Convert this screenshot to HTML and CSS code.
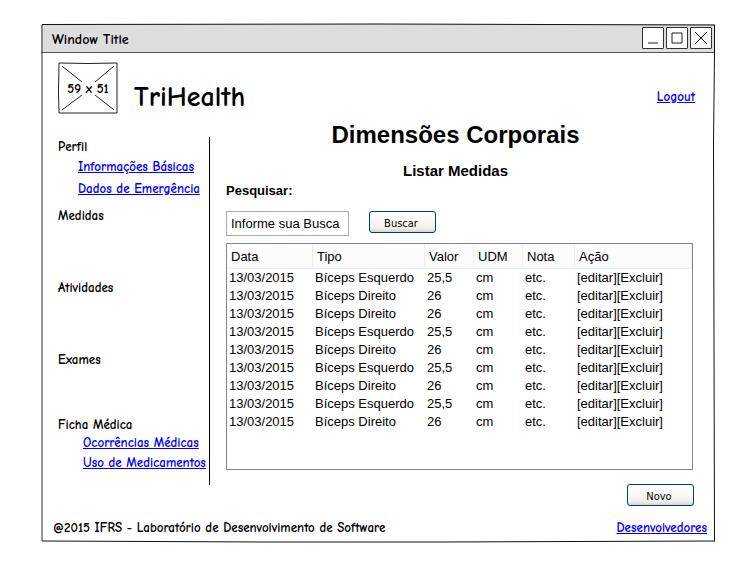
FILE: index.html
```html
<!DOCTYPE html>
<html lang="pt-BR">
<head>
<meta charset="utf-8">
<meta name="viewport" content="width=device-width, initial-scale=1">
<title>TriHealth</title>
<link rel="stylesheet" href="styles.css">
</head>
<body>
<div class="window">
  <svg class="frame" viewBox="0 0 674 518" preserveAspectRatio="none" aria-hidden="true">
    <path class="edge" d="M1 0.500 L340 0 L674 1"/>
    <path class="edge" d="M673.500 1 L673.500 28 L672.500 120 L673.500 517"/>
    <path class="edge" d="M1 517 L220 518 L400 518 L674 517"/>
    <path class="edge soft" d="M1 1 L1 517"/>
  </svg>
  <header class="titlebar">
    <span class="caption">Window Title</span>
    <div class="controls">
      <button type="button" class="control" aria-label="Minimizar"><svg viewBox="0 0 20 20"><path d="M5 15H15"/></svg></button>
      <button type="button" class="control" aria-label="Maximizar"><svg viewBox="0 0 20 20"><path d="M5 5H15V15H5Z"/></svg></button>
      <button type="button" class="control" aria-label="Fechar"><svg viewBox="0 0 20 20"><path class="dark" d="M4 4L16 16M16 4L4 16"/></svg></button>
    </div>
  </header>
  <div class="brand">
    <svg class="logo" viewBox="0 0 60 52" role="img" aria-label="59 x 51">
      <path class="line" d="M1 1L30 1.500L59 1L59 51L1 51L0.500 30Z"/>
      <path class="line" d="M4 4L24 20M56 4L37 20M4 48L24 33M56 48L37 33"/>
      <text x="30" y="31" text-anchor="middle">59 x 51</text>
    </svg>
    <span class="name">TriHealth</span>
    <a class="logout" href="#">Logout</a>
  </div>
  <div class="content">
    <nav class="menu">
      <section><span>Perfil</span><a href="#">Informações Básicas</a><a href="#">Dados de Emergência</a></section>
      <section><span>Medidas</span></section>
      <section><span>Atividades</span></section>
      <section><span>Exames</span></section>
      <section class="records"><span>Ficha Médica</span><a href="#">Ocorrências Médicas</a><a href="#">Uso de Medicamentos</a></section>
    </nav>
    <main class="main">
      <h1>Dimensões Corporais</h1>
      <h2>Listar Medidas</h2>
      <form class="search">
        <label for="q">Pesquisar:</label>
        <div class="search-row">
          <input id="q" type="text" value="Informe sua Busca">
          <button type="button" class="btn">Buscar</button>
        </div>
      </form>
      <div class="list">
        <table>
          <colgroup><col class="c-date"><col class="c-type"><col class="c-value"><col class="c-value"><col class="c-note"><col></colgroup>
          <thead><tr><th>Data</th><th>Tipo</th><th>Valor</th><th>UDM</th><th>Nota</th><th>Ação</th></tr></thead>
          <tbody>
            <tr><td>13/03/2015</td><td>Bíceps Esquerdo</td><td>25,5</td><td>cm</td><td>etc.</td><td>[editar][Excluir]</td></tr>
            <tr><td>13/03/2015</td><td>Bíceps Direito</td><td>26</td><td>cm</td><td>etc.</td><td>[editar][Excluir]</td></tr>
            <tr><td>13/03/2015</td><td>Bíceps Direito</td><td>26</td><td>cm</td><td>etc.</td><td>[editar][Excluir]</td></tr>
            <tr><td>13/03/2015</td><td>Bíceps Esquerdo</td><td>25,5</td><td>cm</td><td>etc.</td><td>[editar][Excluir]</td></tr>
            <tr><td>13/03/2015</td><td>Bíceps Direito</td><td>26</td><td>cm</td><td>etc.</td><td>[editar][Excluir]</td></tr>
            <tr><td>13/03/2015</td><td>Bíceps Esquerdo</td><td>25,5</td><td>cm</td><td>etc.</td><td>[editar][Excluir]</td></tr>
            <tr><td>13/03/2015</td><td>Bíceps Direito</td><td>26</td><td>cm</td><td>etc.</td><td>[editar][Excluir]</td></tr>
            <tr><td>13/03/2015</td><td>Bíceps Esquerdo</td><td>25,5</td><td>cm</td><td>etc.</td><td>[editar][Excluir]</td></tr>
            <tr><td>13/03/2015</td><td>Bíceps Direito</td><td>26</td><td>cm</td><td>etc.</td><td>[editar][Excluir]</td></tr>
          </tbody>
        </table>
      </div>
      <div class="actions"><button type="button" class="btn">Novo</button></div>
    </main>
  </div>
  <footer class="footer">
    <span>@2015 IFRS - Laboratório de Desenvolvimento de Software</span>
    <a href="#">Desenvolvedores</a>
  </footer>
</div>
</body>
</html>
```
FILE: styles.css
```css
* { box-sizing: border-box; }

body {
  margin: 0;
  padding: 24px 35px 36px 41px;
  background: #fff;
  color: #000;
  font: 700 13px/20px "Comic Sans MS", "Comic Neue", "Open Sans", sans-serif;
}

a { color: #00f; }

.window { position: relative; }

.frame {
  position: absolute;
  inset: 0;
  width: 100%;
  height: 100%;
  overflow: visible;
  pointer-events: none;
}

.edge {
  fill: none;
  stroke: #111;
  stroke-width: 1px;
  vector-effect: non-scaling-stroke;
}

.soft { stroke: #333; }

.titlebar {
  display: flex;
  align-items: center;
  justify-content: space-between;
  height: 29px;
  padding: 0 3px 0 11px;
  background: #ddd;
  border-bottom: 1px solid #555;
}

.caption { font-size: 14px; padding-top: 3px; }

.controls { display: flex; gap: 2px; }

.control {
  width: 22px;
  height: 22px;
  padding: 0;
  background: #fff;
  border: 1px solid #333;
  border-radius: 1px;
}

.control svg { display: block; width: 100%; height: 100%; }
.control path, .line { fill: none; stroke: #222; stroke-width: 1px; }
.control .dark { stroke: #000; }

.brand {
  display: flex;
  align-items: center;
  height: 84px;
  padding: 0 20px 18px 17px;
}

.logo { width: 60px; height: 52px; margin-top: 4px; }

.name {
  margin-left: 16px;
  padding-top: 22px;
  font-size: 28px;
  line-height: 32px;
}

.logout { margin-left: auto; padding-top: 22px; }

.content {
  display: grid;
  grid-template-columns: 152px 1fr;
  column-gap: 16px;
  padding: 0 22px 0 17px;
}

.menu {
  display: grid;
  grid-template-rows: 69px 72px 72px 66px 69px;
  align-self: start;
  border-right: 1px solid #000;
}

.menu section { display: flex; flex-direction: column; align-items: flex-start; }
.menu a { margin-left: 20px; white-space: nowrap; }
.menu a + a { margin-top: 2px; }
.menu .records { line-height: 18px; }
.menu .records a { margin-left: 25px; }

.main {
  display: flex;
  flex-direction: column;
  margin-top: -18px;
  font: 13px/18px "Liberation Sans", Arial, sans-serif;
}

h1, h2 { margin: 0; padding-right: 8px; text-align: center; }
h1 { font-size: 24px; line-height: 32px; }
h2 { margin-top: 11px; font-size: 15px; line-height: 18px; }

.search label { display: block; margin-top: 2px; font-weight: 700; }
.search-row { display: flex; gap: 20px; margin-top: 11px; }

.search input {
  width: 123px;
  height: 25px;
  padding: 0 4px;
  border: 1px solid #aaa;
  font: inherit;
}

.btn {
  width: 67px;
  height: 22px;
  padding: 3px 3px 0 0;
  border: 1px solid #003c74;
  border-radius: 3px;
  background: linear-gradient(#fff, #f2f2ec 80%, #d8d4c8);
  color: #000;
  font: 11px/17px "DejaVu Sans Condensed", Tahoma, sans-serif;
}

.list {
  min-height: 227px;
  margin-top: 7px;
  border: 1px solid #828790;
}

table { width: 100%; table-layout: fixed; border-collapse: separate; border-spacing: 0; }
.c-date { width: 86px; }
.c-type { width: 112px; }
.c-value { width: 49px; }
.c-note { width: 52px; }

th {
  height: 25px;
  padding: 1px 0 0 4px;
  background: #fcfcfc;
  border-right: 1px solid #e8eefa;
  border-bottom: 1px solid #e8eefa;
  font-weight: 400;
  text-align: left;
}

td { height: 18px; padding: 0 0 0 2px; white-space: nowrap; }

.actions { display: flex; justify-content: flex-end; margin: 14px -1px 0 0; }

.footer {
  display: flex;
  justify-content: space-between;
  padding: 12px 8px 4px 12px;
}
```
